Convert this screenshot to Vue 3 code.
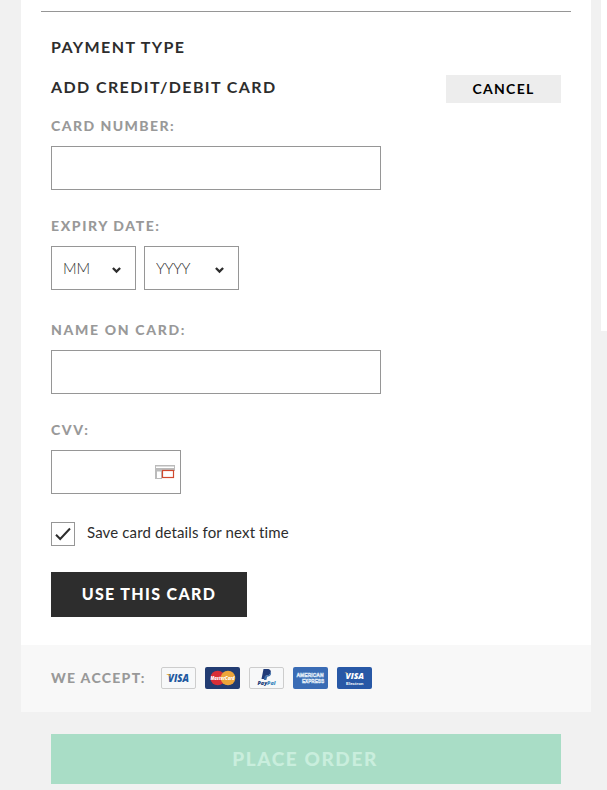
<script setup>
import { ref } from 'vue'

const cardNumber = ref('')
const month = ref('')
const year = ref('')
const cardName = ref('')
const cvv = ref('')
const saveCard = ref(true)

const months = ['01', '02', '03', '04', '05', '06', '07', '08', '09', '10', '11', '12']
const years = ['2016', '2017', '2018', '2019', '2020', '2021']
</script>

<template>
  <div class="checkout">
    <main class="checkout-main">
      <section class="payment-card">
        <form class="payment-form" @submit.prevent>
          <hr class="divider">
          <div class="form-body">
            <h2 class="title payment-title">PAYMENT TYPE</h2>
            <div class="title-row">
              <h2 class="title add-title">ADD CREDIT/DEBIT CARD</h2>
              <button type="button" class="cancel-btn">CANCEL</button>
            </div>

            <div class="field">
              <label for="card-number" class="number-label">CARD NUMBER:</label>
              <input id="card-number" v-model="cardNumber" class="box" type="text">
            </div>

            <div class="field expiry">
              <label for="month" class="expiry-label">EXPIRY DATE:</label>
              <div class="select-row">
                <div class="select-wrap month">
                  <select id="month" v-model="month" class="box">
                    <option value="">MM</option>
                    <option v-for="m in months" :key="m">{{ m }}</option>
                  </select>
                  <svg class="chevron" width="9" height="7" viewBox="0 0 9 7">
                    <path d="M0.9 1 L4.5 4.6 L8.1 1" fill="none" stroke="#2d2d2d" stroke-width="2.3" />
                  </svg>
                </div>
                <div class="select-wrap year">
                  <select v-model="year" class="box" aria-label="Year">
                    <option value="">YYYY</option>
                    <option v-for="y in years" :key="y">{{ y }}</option>
                  </select>
                  <svg class="chevron" width="9" height="7" viewBox="0 0 9 7">
                    <path d="M0.9 1 L4.5 4.6 L8.1 1" fill="none" stroke="#2d2d2d" stroke-width="2.3" />
                  </svg>
                </div>
              </div>
            </div>

            <div class="field">
              <label for="card-name" class="name-label">NAME ON CARD:</label>
              <input id="card-name" v-model="cardName" class="box" type="text">
            </div>

            <div class="field">
              <label for="cvv" class="cvv-label">CVV:</label>
              <div class="cvv-wrap">
                <input id="cvv" v-model="cvv" class="box" type="text">
                <svg class="cvv-icon" width="20" height="14" viewBox="0 0 20 14">
                  <path d="M0 0H20V6H7V14H0Z" fill="#bbb" />
                  <path d="M1 1.5H19V3H1ZM2 6.5H6V13H2Z" fill="#fff" />
                  <rect x="7.5" y="5.5" width="11" height="7" fill="#fff" stroke="#d0492f" stroke-width="1.2" />
                </svg>
              </div>
            </div>

            <label class="save-row">
              <input v-model="saveCard" type="checkbox">
              <span class="check">
                <svg v-if="saveCard" width="16" height="14" viewBox="0 0 16 14">
                  <path d="M1 7.8 L5.2 12 L15 1.5" fill="none" stroke="#2d2d2d" stroke-width="2" />
                </svg>
              </span>
              <span class="save-text">Save card details for next time</span>
            </label>

            <button type="submit" class="use-btn">USE THIS CARD</button>
          </div>
        </form>

        <div class="accept">
          <span class="accept-label">WE ACCEPT:</span>
          <svg class="logo" width="35" height="22" viewBox="0 0 35 22">
            <rect x="0.5" y="0.5" width="34" height="21" rx="1.5" fill="#f7f8f9" stroke="#cdcdcd" />
            <text x="7" y="14.5" class="logo-text" font-size="10" textLength="21" lengthAdjust="spacingAndGlyphs" fill="#2158a0">VISA</text>
            <path d="M5 7H8.2L9.5 10.3Q7.8 8 5 7Z" fill="#e6a92d" />
          </svg>
          <svg class="logo" width="35" height="22" viewBox="0 0 35 22">
            <rect width="35" height="22" rx="2" fill="#223c72" />
            <circle cx="12.7" cy="11" r="7.3" fill="#d82e38" />
            <circle cx="23" cy="11" r="7.3" fill="#eda53a" />
            <text x="5.5" y="13" class="logo-text" font-size="5.5" textLength="24" lengthAdjust="spacingAndGlyphs" fill="#fff">MasterCard</text>
          </svg>
          <svg class="logo" width="35" height="22" viewBox="0 0 35 22">
            <rect x="0.5" y="0.5" width="34" height="21" rx="1.5" fill="#f7f8f9" stroke="#cdcdcd" />
            <path d="M14.5 2H19.5Q23 3 21.3 6.5Q20 8.8 16.7 8.7L15.7 12H12.5Z" fill="#203b78" />
            <path d="M22 4.8Q22.8 9.5 18.2 9.7L17.3 13H14.8L15.9 8.9Q20.7 9 22 4.8Z" fill="#3c6eaa" />
            <text x="8.5" y="18" class="logo-text" font-size="5.2" textLength="18" lengthAdjust="spacingAndGlyphs" fill="#213b78">Pay<tspan fill="#3b86bd">Pal</tspan></text>
          </svg>
          <svg class="logo" width="35" height="22" viewBox="0 0 35 22">
            <rect width="35" height="22" rx="2" fill="#3a6cb5" />
            <g class="amex-text" fill="#3a6cb5" stroke="#dfe9f5" stroke-width="0.6">
              <text x="3.5" y="10" font-size="5.5" textLength="27" lengthAdjust="spacingAndGlyphs">AMERICAN</text>
              <text x="9" y="16" font-size="5.2" textLength="22" lengthAdjust="spacingAndGlyphs">EXPRESS</text>
            </g>
          </svg>
          <svg class="logo" width="35" height="22" viewBox="0 0 35 22">
            <rect width="35" height="22" rx="2" fill="#2858a6" />
            <text x="8.5" y="12" class="logo-text" font-size="9" textLength="18.5" lengthAdjust="spacingAndGlyphs" fill="#fff">VISA</text>
            <path d="M7.5 5.5H10L11 8Q9.5 6.3 7.5 5.5Z" fill="#e9ca8a" />
            <text x="9" y="17.7" class="electron" font-size="4.2" textLength="17.5" lengthAdjust="spacingAndGlyphs" fill="#fff">Electron</text>
          </svg>
        </div>
      </section>

      <button class="place-btn" disabled>PLACE ORDER</button>
    </main>

    <aside class="summary"></aside>
  </div>
</template>

<style>
body{
  background:#f1f1f1;
}
</style>

<style scoped>
.checkout{
  display:flex;
  align-items:flex-start;
  gap:10px;
  height:790px;
  padding-left:21px;
  box-sizing:border-box;
  overflow:hidden;
  background:#f1f1f1;
  color:#2d2d2d;
  font-family:Lato, "Liberation Sans", sans-serif;
}

.checkout-main{
  width:570px;
  flex:none;
}

.summary{
  flex:1;
  height:331px;
  background:#fff;
}

.payment-card{
  background:#fff;
}

.payment-form{
  padding:11px 20px 28px;
}

.divider{
  height:1px;
  margin:0;
  border:0;
  background:#969696;
}

.form-body{
  padding:25px 10px 0;
}

.title{
  margin:0;
  font-size:16px;
  line-height:20px;
  font-weight:700;
  white-space:nowrap;
}

.payment-title{
  letter-spacing:1.4px;
}

.title-row{
  display:flex;
  justify-content:space-between;
  margin:18px 0 13px;
}

.add-title{
  padding-top:2px;
  letter-spacing:1.4px;
}

button{
  display:block;
  border:0;
  padding:0;
  font-family:inherit;
  font-weight:900;
  text-align:center;
}

.cancel-btn{
  width:115px;
  height:28px;
  padding-bottom:1px;
  background:#ededed;
  color:#000;
  font-size:14px;
  font-weight:700;
  letter-spacing:1.3px;
}

.field{
  display:flex;
  flex-direction:column;
  align-items:flex-start;
  gap:10px;
  margin-bottom:26px;
}

.field.expiry{
  margin-bottom:30px;
}

.field label,
.accept-label{
  color:#999;
  font-size:14px;
  line-height:20px;
  font-weight:900;
  letter-spacing:1.6px;
  white-space:nowrap;
}

.field .number-label{
  letter-spacing:1.45px;
}

.field .name-label{
  letter-spacing:1.68px;
}

.box{
  box-sizing:border-box;
  width:330px;
  height:44px;
  padding:0 12px;
  border:1px solid #969696;
  border-radius:0;
  background:#fff;
  color:#2d2d2d;
  font-family:inherit;
  font-size:15px;
  outline:none;
}

.select-row{
  display:flex;
  gap:8px;
}

.select-wrap,
.cvv-wrap{
  position:relative;
}

.select-wrap .box{
  width:100%;
  appearance:none;
  padding:0 11px;
  font-weight:300;
}

.month{
  width:85px;
}

.year{
  width:95px;
}

.year .box{
  letter-spacing:-0.4px;
}

.chevron{
  position:absolute;
  right:15px;
  top:21px;
  pointer-events:none;
}

.cvv-wrap .box{
  display:block;
  width:130px;
}

.cvv-icon{
  position:absolute;
  right:6px;
  top:15px;
}

.save-row{
  display:flex;
  align-items:center;
  gap:12px;
  margin:28px 0 26px;
}

.save-row input{
  display:none;
}

.check{
  display:flex;
  align-items:center;
  justify-content:center;
  width:22px;
  height:22px;
  border:1px solid #969696;
}

.save-text{
  font-size:15px;
  line-height:20px;
  letter-spacing:0.13px;
  margin-top:-4px;
  white-space:nowrap;
}

.use-btn{
  width:196px;
  height:45px;
  padding-bottom:2px;
  background:#2d2d2d;
  color:#fff;
  font-size:16px;
  letter-spacing:1.35px;
}

.accept{
  display:flex;
  align-items:center;
  gap:9px;
  height:67px;
  padding:0 0 2px 30px;
  box-sizing:border-box;
  background:#f8f8f8;
}

.accept .accept-label{
  width:101px;
  letter-spacing:1.3px;
}

.logo{
  flex:none;
}

.logo-text{
  font-family:"Open Sans", sans-serif;
  font-weight:800;
  font-style:italic;
}

.amex-text,
.electron{
  font-family:"Liberation Sans", sans-serif;
  font-weight:700;
}

.place-btn{
  width:510px;
  height:50px;
  margin:22px 0 0 30px;
  padding:0 2px 2px 0;
  background:#a9ddc6;
  color:#c9eedd;
  font-size:19px;
  letter-spacing:1.6px;
}
</style>
